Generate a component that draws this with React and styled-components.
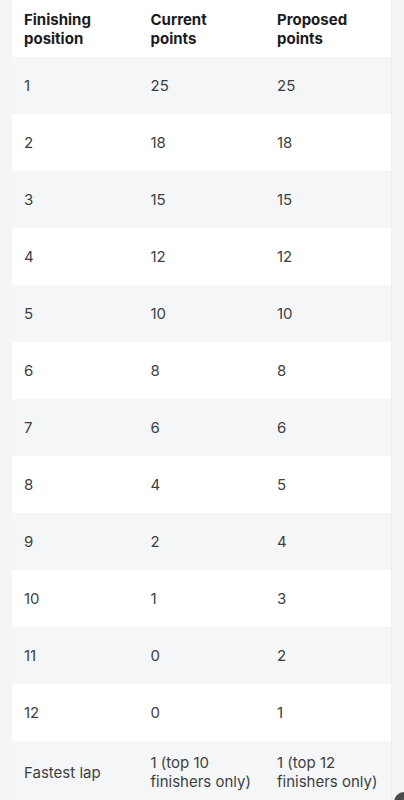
import React from "react";
import styled, { createGlobalStyle } from "styled-components";

const GlobalStyle = createGlobalStyle`
  html, body {
    margin: 0;
    padding: 0;
    background: #f4f5f7;
    font-family: Inter, "Noto Sans", sans-serif;
  }
`;

const Page = styled.div`
  padding: 0 12px 0 12px;
  min-height: 800px;
  box-sizing: border-box;
`;

const Table = styled.table`
  width: 100%;
  border-collapse: collapse;
  table-layout: fixed;
  background: #ffffff;
  border-right: 1px solid #eceef1;
`;

const HeadCell = styled.th`
  text-align: left;
  vertical-align: middle;
  height: 57px;
  padding: 0 12px;
  font-size: 15px;
  line-height: 19px;
  font-weight: 700;
  color: #1b1c1e;
  background: #ffffff;
`;

const Row = styled.tr`
  background: ${props => (props.striped ? "#f5f6f8" : "#ffffff")};
`;

const Cell = styled.td`
  height: 57px;
  padding: 12px;
  box-sizing: border-box;
  vertical-align: middle;
  font-size: 15px;
  line-height: 19px;
  color: #3d3f42;
`;

const Fab = styled.div`
  position: fixed;
  right: -10px;
  bottom: -12px;
  width: 20px;
  height: 20px;
  border-radius: 50%;
  background: #4a4b4d;
`;

const rows = [
  ["1", "25", "25"],
  ["2", "18", "18"],
  ["3", "15", "15"],
  ["4", "12", "12"],
  ["5", "10", "10"],
  ["6", "8", "8"],
  ["7", "6", "6"],
  ["8", "4", "5"],
  ["9", "2", "4"],
  ["10", "1", "3"],
  ["11", "0", "2"],
  ["12", "0", "1"],
  ["Fastest lap", "1 (top 10 finishers only)", "1 (top 12 finishers only)"]
];

export default () => (
  <>
    <GlobalStyle />
    <Page>
      <Table>
        <thead>
          <tr>
            <HeadCell>Finishing position</HeadCell>
            <HeadCell>Current points</HeadCell>
            <HeadCell>Proposed points</HeadCell>
          </tr>
        </thead>
        <tbody>
          {rows.map((row, index) => (
            <Row key={row[0]} striped={index % 2 === 0}>
              {row.map((cell, i) => (
                <Cell key={i}>{cell}</Cell>
              ))}
            </Row>
          ))}
        </tbody>
      </Table>
    </Page>
    <Fab />
  </>
);
